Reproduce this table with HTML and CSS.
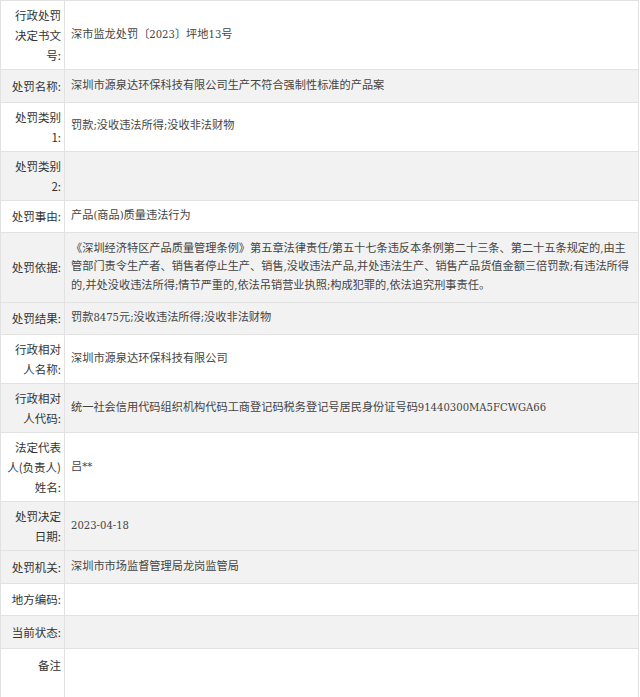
FILE: index.html
```html
<!DOCTYPE html>
<html lang="zh-CN">
<head>
<meta charset="utf-8">
<title>行政处罚信息</title>
<link rel="stylesheet" href="styles.css">
</head>
<body>
<table class="info">
  <colgroup><col class="col-label"><col class="col-value"></colgroup>
  <tbody>
    <tr><th>行政处罚决定书文号:</th><td>深市监龙处罚〔2023〕坪地13号</td></tr>
    <tr class="alt"><th>处罚名称:</th><td>深圳市源泉达环保科技有限公司生产不符合强制性标准的产品案</td></tr>
    <tr><th>处罚类别1:</th><td>罚款;没收违法所得;没收非法财物</td></tr>
    <tr class="alt"><th>处罚类别2:</th><td></td></tr>
    <tr><th>处罚事由:</th><td>产品(商品)质量违法行为</td></tr>
    <tr class="alt"><th>处罚依据:</th><td>《深圳经济特区产品质量管理条例》第五章法律责任/第五十七条违反本条例第二十三条、第二十五条规定的,由主管部门责令生产者、销售者停止生产、销售,没收违法产品,并处违法生产、销售产品货值金额三倍罚款;有违法所得的,并处没收违法所得;情节严重的,依法吊销营业执照;构成犯罪的,依法追究刑事责任。</td></tr>
    <tr class="alt"><th>处罚结果:</th><td>罚款8475元;没收违法所得;没收非法财物</td></tr>
    <tr><th>行政相对人名称:</th><td>深圳市源泉达环保科技有限公司</td></tr>
    <tr class="alt"><th>行政相对人代码:</th><td>统一社会信用代码组织机构代码工商登记码税务登记号居民身份证号码91440300MA5FCWGA66</td></tr>
    <tr><th>法定代表人(负责人)姓名:</th><td>吕**</td></tr>
    <tr class="alt"><th>处罚决定日期:</th><td>2023-04-18</td></tr>
    <tr class="alt"><th>处罚机关:</th><td>深圳市市场监督管理局龙岗监管局</td></tr>
    <tr><th>地方编码:</th><td></td></tr>
    <tr class="alt"><th>当前状态:</th><td></td></tr>
    <tr class="note"><th>备注</th><td></td></tr>
  </tbody>
</table>
</body>
</html>
```

FILE: styles.css
```css
html, body {
  margin: 0;
  padding: 0;
  background: #ffffff;
}

body {
  font-family: "Noto Sans CJK SC", "Noto Sans", sans-serif;
  color: #333333;
}

.info {
  border-collapse: collapse;
  table-layout: fixed;
  width: 639px;
}

.col-label {
  width: 64px;
}

.info th,
.info td {
  border: 1px solid #e2e2e2;
  vertical-align: middle;
}

.info th {
  font-weight: normal;
  text-align: right;
  font-size: 11.5px;
  line-height: 20px;
  padding: 4px 3px 4px 6px;
  color: #333333;
}

.info td {
  font-family: "DejaVu Serif Condensed", "Liberation Serif", "Noto Sans CJK SC", serif;
  font-size: 11.2px;
  line-height: 18.5px;
  height: 18.5px;
  padding: 6.5px 7px 6.5px 6px;
  color: #444444;
  text-align: left;
}

.info tr.alt th,
.info tr.alt td {
  background: #f2f2f2;
}

.info tr.note th {
  vertical-align: top;
  padding-top: 6px;
}

.info tr.note td {
  height: 37px;
}
```
